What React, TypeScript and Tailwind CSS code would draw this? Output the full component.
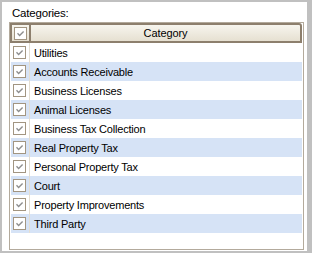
import React from 'react';

const categories = [
  'Utilities',
  'Accounts Receivable',
  'Business Licenses',
  'Animal Licenses',
  'Business Tax Collection',
  'Real Property Tax',
  'Personal Property Tax',
  'Court',
  'Property Improvements',
  'Third Party',
];

const CheckBox: React.FC = () => (
  <div className="w-[13px] h-[13px] border border-[#a29581] bg-white flex items-center justify-center">
    <svg width="9" height="9" viewBox="0 0 9 9">
      <path d="M1.5 4.3 L3.6 6.4 L7.6 2.4" fill="none" stroke="#8e8e8e" strokeWidth="1.4" />
    </svg>
  </div>
);

export default function App() {
  return (
    <div
      className="w-[312px] h-[253px] bg-[#c0c0c0] pt-[2px] pl-[2px] pr-[5px] pb-[2px]"
      style={{ fontFamily: '"Liberation Sans", Arial, sans-serif' }}
    >
      <div className="h-full bg-white flex flex-col pl-[7px] pr-[3px] pb-[1px]">
        <div className="text-[11.5px] tracking-[-0.2px] text-[#000] h-[20px] pt-[4px] pl-[3px] leading-[14px]">Categories:</div>
        <div className="flex-1 border border-[#b3aa9c] flex flex-col">
          {/* header */}
          <div className="flex h-[20px] mr-[1px] bg-gradient-to-b from-[#f7f5ee] to-[#e6e0d1] border-2 border-[#8d7f6d] rounded-tr-[3px]">
            <div className="w-[19px] flex items-center justify-center border-r-2 border-[#8d7f6d]">
              <CheckBox />
            </div>
            <div className="flex-1 flex items-center justify-center text-[11px] tracking-[-0.1px] text-[#000]">Category</div>
          </div>
          {/* rows */}
          <div className="flex flex-col pl-[1px] pr-[1px]">
            {categories.map((c, i) => (
              <div key={c} className={`flex h-[19px] ${i % 2 === 1 ? 'bg-[#d6e3f6]' : 'bg-white'}`}>
                <div className="w-[19px] flex items-center justify-center pr-[1px] border-r border-[#e4ded2]">
                  <CheckBox />
                </div>
                <div className="flex-1 flex items-center pl-[4px] pt-[1px] text-[11px] tracking-[-0.2px] text-[#000]">{c}</div>
              </div>
            ))}
          </div>
        </div>
      </div>
    </div>
  );
}
